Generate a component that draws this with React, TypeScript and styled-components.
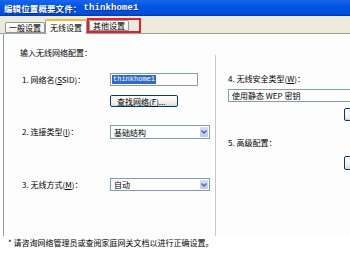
import styled, { createGlobalStyle } from "styled-components"

const GlobalStyle = createGlobalStyle`
  html, body {
    margin: 0;
    padding: 0;
    background: #ffffff;
  }
  body {
    width: 350px;
    height: 260px;
    overflow: hidden;
    font-family: "Noto Sans CJK SC", "DejaVu Sans", sans-serif;
    font-size: 8px;
    color: #000;
  }
`

function App() {
  return (
    <Window>
      <GlobalStyle />
      <TitleBar>
        编辑位置概要文件：<Mono>thinkhome1</Mono>
      </TitleBar>
      <TabStrip>
        <Tab>一般设置</Tab>
        <Tab $active>无线设置</Tab>
        <Marked>
          <Tab>其他设置</Tab>
        </Marked>
      </TabStrip>
      <Panel>
        <LeftColumn>
          <Heading>输入无线网络配置：</Heading>
          <Row $top={15}>
            <Label>
              1. 网络名(<u>S</u>SID)：
            </Label>
            <TextBox>
              <Selected>thinkhome1</Selected>
            </TextBox>
          </Row>
          <Row $top={9}>
            <Label />
            <Button $width={68}>查找网络(<u>F</u>)...</Button>
          </Row>
          <Row $top={18}>
            <Label>
              2. 连接类型(<u>I</u>)：
            </Label>
            <Select $width={100} $height={14}>
              <span>基础结构</span>
              <Arrow />
            </Select>
          </Row>
          <Row $top={39}>
            <Label>
              3. 无线方式(<u>M</u>)：
            </Label>
            <Select $width={100} $height={13}>
              <span>自动</span>
              <Arrow />
            </Select>
          </Row>
        </LeftColumn>
        <RightColumn>
          <SideLabel $top={19}>
            4. 无线安全类型(<u>W</u>)：
          </SideLabel>
          <Select $width={140} $height={13} $top={5}>
            <span>使用静态 WEP 密钥</span>
          </Select>
          <SideButton $top={6} $height={13} />
          <SideLabel $top={17}>5. 高级配置：</SideLabel>
          <SideButton $top={8} $height={14} />
        </RightColumn>
      </Panel>
      <Footer>* 请咨询网络管理员或查阅家庭网关文档以进行正确设置。</Footer>
    </Window>
  )
}

function Arrow() {
  return (
    <ArrowBox>
      <svg width="6" height="4" viewBox="0 0 6 4">
        <path d="M0.5 0.5 L3 3 L5.5 0.5" fill="none" stroke="#4D6185" strokeWidth="1.3" />
      </svg>
    </ArrowBox>
  )
}

export default App

const Window = styled.div`
  width: 350px;
  height: 260px;
  display: flex;
  flex-direction: column;
  overflow: hidden;
`

const TitleBar = styled.div`
  height: 16px;
  box-sizing: border-box;
  padding-left: 4px;
  display: flex;
  align-items: center;
  background: linear-gradient(#1a66ee, #0054e3 40%, #0050dc 85%, #0038a8);
  color: #ffffff;
  font-weight: bold;
  font-size: 8.5px;
  letter-spacing: 0.1px;
  text-shadow: 1px 1px 0 #0a2c8a;
  white-space: nowrap;
`

const Mono = styled.span`
  font-family: "Liberation Mono", "DejaVu Sans Mono", monospace;
  font-size: 9px;
  margin-left: 2px;
`

const TabStrip = styled.div`
  height: 18px;
  box-sizing: border-box;
  display: flex;
  align-items: flex-end;
  padding-left: 5px;
  background: #ede9dc;
  border-bottom: 1px solid #a0a0a0;
`

const Tab = styled.div<{ $active?: boolean }>`
  height: ${(p) => (p.$active ? 15 : 11)}px;
  box-sizing: border-box;
  padding: 0 ${(p) => (p.$active ? 4 : 3)}px;
  margin-bottom: ${(p) => (p.$active ? -1 : 0)}px;
  display: flex;
  align-items: center;
  white-space: nowrap;
  border: 1px solid #919b9c;
  border-bottom: ${(p) => (p.$active ? "none" : "1px solid #919b9c")};
  border-top: ${(p) => (p.$active ? "2px solid #f5b73a" : "1px solid #919b9c")};
  border-radius: 2px 2px 0 0;
  background: ${(p) => (p.$active ? "#ffffff" : "linear-gradient(#ffffff, #f0f0ea)")};
`

const Marked = styled.div`
  width: 54px;
  height: 15px;
  box-sizing: border-box;
  border: 2px solid #e3202a;
  display: flex;
  align-items: flex-end;
`

const Panel = styled.div`
  height: 202px;
  margin-left: 3px;
  display: flex;
  border-left: 1px solid #919b9c;
  background: #fdfdfd;
`

const LeftColumn = styled.div`
  width: 211px;
  display: flex;
  flex-direction: column;
  padding-top: 14px;
  box-sizing: border-box;
`

const Heading = styled.div`
  height: 10px;
  line-height: 10px;
  padding-left: 16px;
  white-space: nowrap;
`

const Row = styled.div<{ $top: number }>`
  margin-top: ${(p) => p.$top}px;
  padding-left: 18px;
  display: flex;
  align-items: center;
`

const Label = styled.div`
  width: 88px;
  flex: none;
  white-space: nowrap;
  line-height: 10px;
`

const TextBox = styled.div`
  width: 88px;
  height: 13px;
  box-sizing: border-box;
  border: 1px solid #7f9db9;
  background: #ffffff;
  display: flex;
  align-items: center;
  padding-left: 1px;
`

const Selected = styled.span`
  background: #316ac5;
  color: #ffffff;
  font-family: "Liberation Mono", "DejaVu Sans Mono", monospace;
  font-size: 7px;
  line-height: 9px;
  padding: 0 1px;
`

const Button = styled.div<{ $width: number }>`
  width: ${(p) => p.$width}px;
  height: 12px;
  box-sizing: border-box;
  border: 1px solid #003c74;
  border-radius: 2px;
  background: linear-gradient(#ffffff, #f0efe9 70%, #dcd9cf);
  display: flex;
  align-items: center;
  padding-left: 6px;
  white-space: nowrap;
`

const Select = styled.div<{ $width: number; $height: number; $top?: number }>`
  width: ${(p) => p.$width}px;
  height: ${(p) => p.$height}px;
  margin-top: ${(p) => p.$top ?? 0}px;
  flex: none;
  box-sizing: border-box;
  border: 1px solid #7f9db9;
  background: #ffffff;
  display: flex;
  align-items: center;
  justify-content: space-between;
  padding-left: 3px;
  white-space: nowrap;
`

const ArrowBox = styled.div`
  width: 10px;
  height: 100%;
  box-sizing: border-box;
  border: 1px solid #ffffff;
  border-radius: 2px;
  background: linear-gradient(#d2ddfb, #b6c9f5);
  display: flex;
  align-items: center;
  justify-content: center;
`

const RightColumn = styled.div`
  flex: 1;
  margin-top: 21px;
  border-left: 1px solid #c8c8c8;
  display: flex;
  flex-direction: column;
  padding-left: 12px;
  overflow: hidden;
`

const SideLabel = styled.div<{ $top: number }>`
  margin-top: ${(p) => p.$top}px;
  height: 10px;
  line-height: 10px;
  white-space: nowrap;
`

const SideButton = styled.div<{ $top: number; $height: number }>`
  margin-top: ${(p) => p.$top}px;
  margin-left: 116px;
  width: 20px;
  height: ${(p) => p.$height}px;
  flex: none;
  box-sizing: border-box;
  border: 1px solid #003c74;
  border-radius: 2px;
  background: linear-gradient(#ffffff, #f0efe9 70%, #dcd9cf);
`

const Footer = styled.div`
  margin-top: 2px;
  padding-left: 8px;
  height: 10px;
  line-height: 10px;
  white-space: nowrap;
`
